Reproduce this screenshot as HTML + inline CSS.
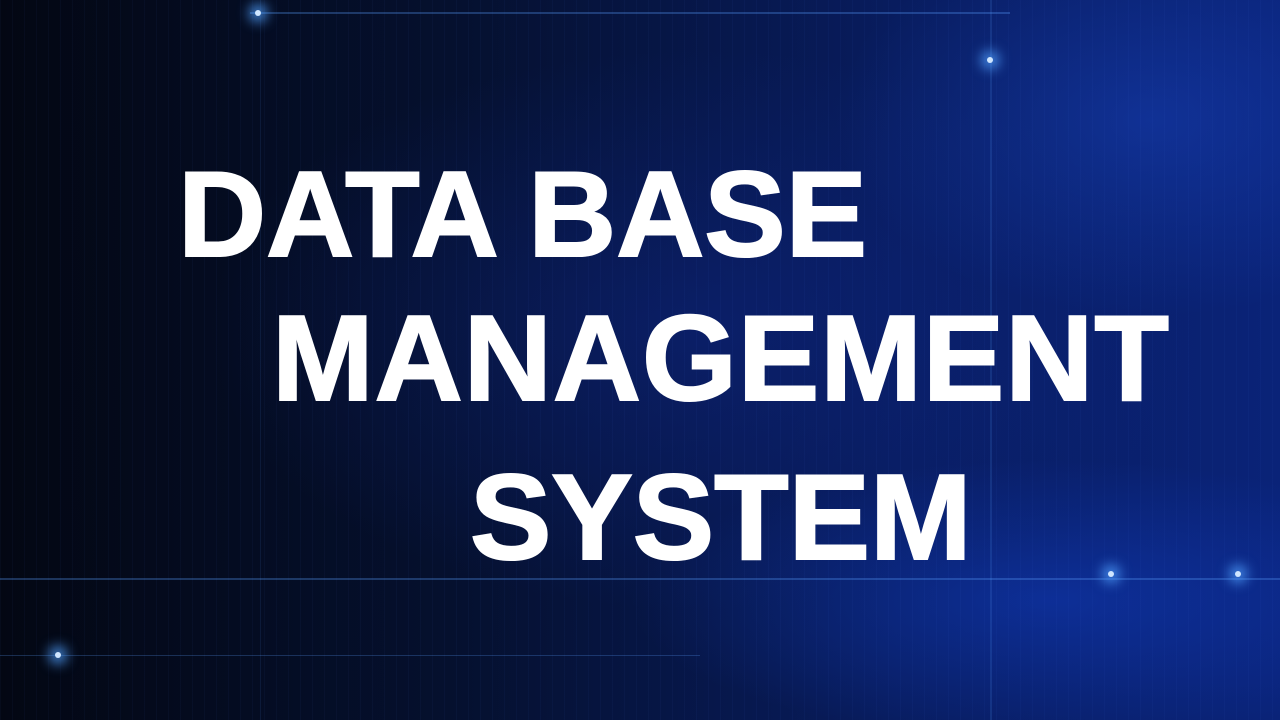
<!DOCTYPE html>
<html><head><meta charset="utf-8"><style>
html,body{margin:0;padding:0}
body{width:1280px;height:720px;overflow:hidden;position:relative;
background:
radial-gradient(ellipse 450px 280px at 1150px 120px, rgba(30,80,220,0.35), transparent 70%),
radial-gradient(ellipse 600px 200px at 1050px 600px, rgba(20,70,220,0.4), transparent 70%),
radial-gradient(ellipse 700px 400px at 700px 330px, rgba(15,40,140,0.45), transparent 70%),
linear-gradient(90deg,#030713 0%,#05102e 35%,#081c5e 70%,#0a2378 100%);
font-family:"Liberation Sans",Arial,sans-serif;}
.grid{position:absolute;inset:0;background:
repeating-linear-gradient(90deg,rgba(80,130,255,0.04) 0 1px,transparent 1px 12px);}
.l{position:absolute;background:rgba(90,160,255,0.5)}
.t{position:absolute;color:#fff;font-weight:bold;font-size:122px;line-height:1;white-space:nowrap;-webkit-text-stroke:2px #fff}
.dot{position:absolute;width:6px;height:6px;border-radius:50%;background:#cfe6ff;box-shadow:0 0 12px 6px rgba(80,160,255,.8)}
</style></head><body>
<div class="grid"></div>
<div class="l" style="left:250px;top:12px;width:760px;height:2px;opacity:.6"></div>
<div class="l" style="left:0;top:578px;width:1280px;height:2px;opacity:.6"></div>
<div class="l" style="left:0;top:655px;width:700px;height:1px;opacity:.5"></div>
<div class="l" style="left:260px;top:0;width:1px;height:720px;opacity:.2"></div>
<div class="l" style="left:990px;top:0;width:2px;height:720px;opacity:.3"></div>
<div class="dot" style="left:987px;top:57px"></div>
<div class="dot" style="left:1108px;top:571px"></div>
<div class="dot" style="left:1235px;top:571px"></div>
<div class="dot" style="left:255px;top:10px"></div>
<div class="dot" style="left:55px;top:652px"></div>
<div class="t" style="left:178px;top:153px">DATA BASE</div>
<div class="t" style="left:272px;top:297px;letter-spacing:1px">MANAGEMENT</div>
<div class="t" style="left:470px;top:456px">SYSTEM</div>
</body></html>
